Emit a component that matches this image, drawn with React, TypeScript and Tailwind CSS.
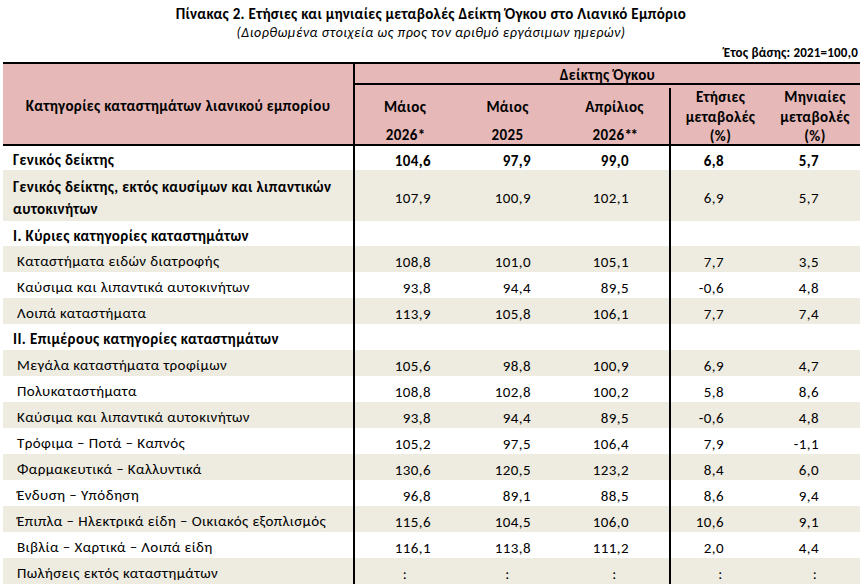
import React from "react";

type Row = {
  label: React.ReactNode;
  vals?: string[];
  h: number;
  bg: boolean;
  boldLabel?: boolean;
  boldNums?: boolean;
  section?: boolean;
};

const rows: Row[] = [
  { label: "Γενικός δείκτης", vals: ["104,6", "97,9", "99,0", "6,8", "5,7"], h: 24, bg: false, boldLabel: true, boldNums: true, section: true },
  {
    label: (
      <>
        Γενικός δείκτης, εκτός καυσίμων και λιπαντικών
        <br />
        αυτοκινήτων
      </>
    ),
    vals: ["107,9", "100,9", "102,1", "6,9", "5,7"],
    h: 51,
    bg: true,
    boldLabel: true,
    section: true,
  },
  { label: "I. Κύριες κατηγορίες καταστημάτων", h: 25, bg: false, boldLabel: true, section: true },
  { label: "Καταστήματα ειδών διατροφής", vals: ["108,8", "101,0", "105,1", "7,7", "3,5"], h: 26, bg: true },
  { label: "Καύσιμα και λιπαντικά αυτοκινήτων", vals: ["93,8", "94,4", "89,5", "-0,6", "4,8"], h: 26, bg: false },
  { label: "Λοιπά καταστήματα", vals: ["113,9", "105,8", "106,1", "7,7", "7,4"], h: 26, bg: true },
  { label: "II. Επιμέρους κατηγορίες καταστημάτων", h: 26, bg: false, boldLabel: true, section: true },
  { label: "Μεγάλα καταστήματα τροφίμων", vals: ["105,6", "98,8", "100,9", "6,9", "4,7"], h: 26, bg: true },
  { label: "Πολυκαταστήματα", vals: ["108,8", "102,8", "100,2", "5,8", "8,6"], h: 26, bg: false },
  { label: "Καύσιμα και λιπαντικά αυτοκινήτων", vals: ["93,8", "94,4", "89,5", "-0,6", "4,8"], h: 26, bg: true },
  { label: "Τρόφιμα – Ποτά – Καπνός", vals: ["105,2", "97,5", "106,4", "7,9", "-1,1"], h: 26, bg: false },
  { label: "Φαρμακευτικά – Καλλυντικά", vals: ["130,6", "120,5", "123,2", "8,4", "6,0"], h: 26, bg: true },
  { label: "Ένδυση – Υπόδηση", vals: ["96,8", "89,1", "88,5", "8,6", "9,4"], h: 26, bg: false },
  { label: "Έπιπλα – Ηλεκτρικά είδη – Οικιακός εξοπλισμός", vals: ["115,6", "104,5", "106,0", "10,6", "9,1"], h: 26, bg: true },
  { label: "Βιβλία – Χαρτικά – Λοιπά είδη", vals: ["116,1", "113,8", "111,2", "2,0", "4,4"], h: 26, bg: false },
  { label: "Πωλήσεις εκτός καταστημάτων", vals: [":", ":", ":", ":", ":"], h: 26, bg: true },
];

function NumCell({ v, cls, pr }: { v?: string; cls: string; pr: string }) {
  const colon = v === ":";
  return (
    <div className={`${cls} flex items-center pt-[6px] ${colon ? "justify-center" : `justify-end ${pr}`}`}>
      {v}
    </div>
  );
}

export default function App() {
  return (
    <div className="w-[862px] h-[586px] overflow-hidden bg-white text-black font-[Carlito,Lato,'Noto_Sans',sans-serif]">
      <div className="pt-[5px] text-center">
        <div className="text-[15px] leading-[18px] font-bold tracking-[0.3px]">
          Πίνακας 2. Ετήσιες και μηνιαίες μεταβολές Δείκτη Όγκου στο Λιανικό Εμπόριο
        </div>
        <div className="pt-[1px] text-[14px] leading-[18px] italic tracking-[0.5px]">
          (Διορθωμένα στοιχεία ως προς τον αριθμό εργάσιμων ημερών)
        </div>
      </div>
      <div className="mt-[3px] pr-[4px] text-right text-[13px] leading-[16px] font-bold tracking-[0.2px]">
        Έτος βάσης: 2021=100,0
      </div>
      <div className="ml-[3px] mt-[1px] w-[857px]">
        {/* Header */}
        <div className="flex bg-[#e6b8b7] border-t-2 border-b-2 border-black text-[15px] font-bold tracking-[0.35px]">
          <div className="w-[352px] border-r-2 border-black flex items-center justify-center pt-[5px]">
            Κατηγορίες καταστημάτων λιανικού εμπορίου
          </div>
          <div className="flex-1 flex flex-col">
            <div className="h-[21px] border-b-2 border-black flex items-center justify-center leading-[20px] pt-[2px]">
              Δείκτης Όγκου
            </div>
            <div className="h-[59px] flex leading-[19.5px] pt-[3px]">
              <div className="w-[100px] flex flex-col items-center">
                <div className="h-[39px] flex items-center">Μάιος</div>
                <div className="h-[17px] flex items-center">
                  2026<span className="tracking-[-1px]">*</span>
                </div>
              </div>
              <div className="w-[105px] flex flex-col items-center">
                <div className="h-[39px] flex items-center">Μάιος</div>
                <div className="h-[17px] flex items-center">2025</div>
              </div>
              <div className="w-[111px] border-r-2 border-black flex flex-col items-center">
                <div className="h-[39px] flex items-center">Απρίλιος</div>
                <div className="h-[17px] flex items-center">
                  2026<span className="tracking-[-1.5px]">**</span>
                </div>
              </div>
              <div className="w-[99px] flex flex-col items-center text-center">
                <div className="h-[19.5px]">Ετήσιες</div>
                <div className="h-[19.5px]">μεταβολές</div>
                <div className="h-[17px]">(%)</div>
              </div>
              <div className="w-[90px] flex flex-col items-center text-center">
                <div className="h-[19.5px]">Μηνιαίες</div>
                <div className="h-[19.5px]">μεταβολές</div>
                <div className="h-[17px]">(%)</div>
              </div>
            </div>
          </div>
        </div>
        {/* Body */}
        {rows.map((r, i) => (
          <div
            key={i}
            className={`flex text-[15px] tracking-[0.4px] ${r.bg ? "bg-[#eeece1]" : "bg-white"}`}
            style={{ height: r.h }}
          >
            <div
              className={`w-[352px] border-r-2 border-black flex items-center leading-[21.5px] pt-[6px] ${
                r.section ? "pl-[10px]" : "pl-[14px]"
              } ${r.boldLabel ? "font-bold" : ""}`}
            >
              <div>{r.label}</div>
            </div>
            <div className={`flex ${r.boldNums ? "font-bold" : ""}`}>
              <NumCell v={r.vals?.[0]} cls="w-[100px]" pr="pr-[24px]" />
              <NumCell v={r.vals?.[1]} cls="w-[105px]" pr="pr-[29px]" />
              <NumCell v={r.vals?.[2]} cls="w-[111px] border-r-2 border-black" pr="pr-[40px]" />
              <NumCell v={r.vals?.[3]} cls="w-[99px]" pr="pr-[46px]" />
              <NumCell v={r.vals?.[4]} cls="w-[90px]" pr="pr-[41px]" />
            </div>
          </div>
        ))}
      </div>
    </div>
  );
}
